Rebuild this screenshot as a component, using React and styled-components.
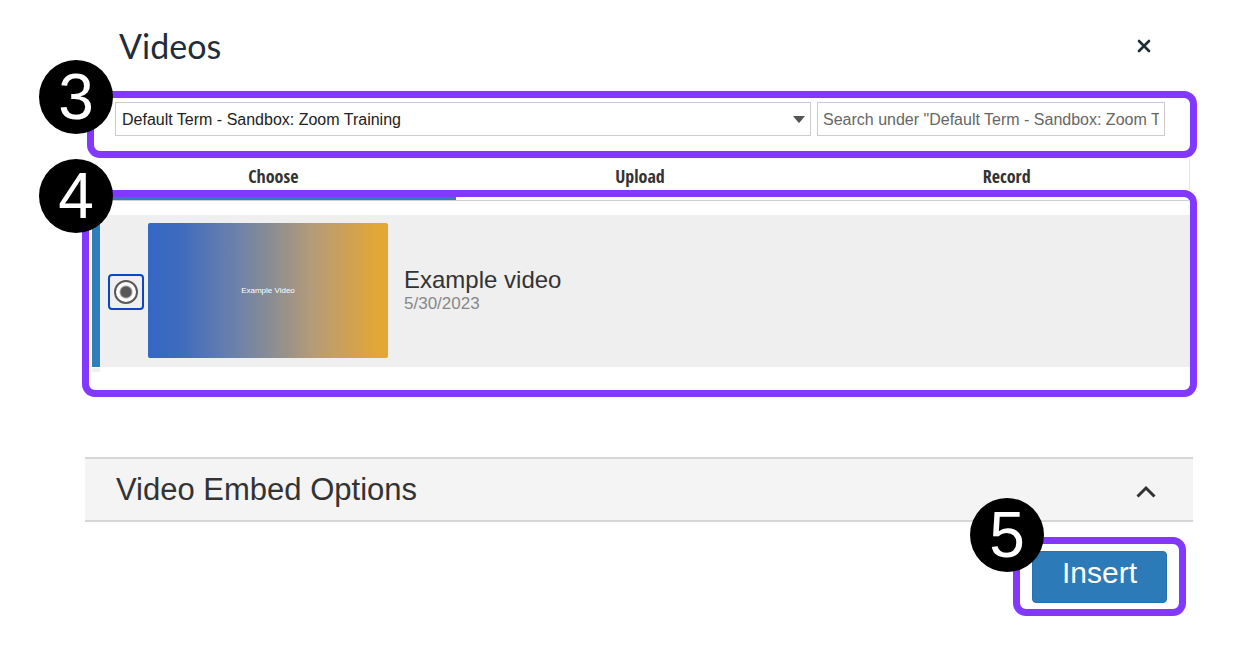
import React, { useState } from "react";
import styled, { createGlobalStyle } from "styled-components";

const GlobalStyle = createGlobalStyle`
  * {
    box-sizing: border-box;
  }

  body {
    margin: 0;
    background: #fff;
    color: #333;
    font-family: "Liberation Sans", Arial, sans-serif;
  }

  button, input, select {
    font-family: inherit;
  }
`;

const tabs = ["Choose", "Upload", "Record"];

const App = () => {
  const [activeTab, setActiveTab] = useState(0);
  const [query, setQuery] = useState("");
  const [open, setOpen] = useState(true);

  return (
    <Page>
      <GlobalStyle />
      <Header>
        <Title>Videos</Title>
        <CloseButton type="button" aria-label="Close">
          <svg width="14" height="14" viewBox="0 0 14 14" fill="none" stroke="currentColor" strokeWidth="2.6" strokeLinecap="round">
            <path d="M2 2 12 12M12 2 2 12" />
          </svg>
        </CloseButton>
      </Header>

      <FilterCallout>
        <Badge>3</Badge>
        <SelectBox>
          <Select aria-label="Folder">
            <option>Default Term - Sandbox: Zoom Training</option>
          </Select>
          <Caret width="12" height="7" viewBox="0 0 12 7" fill="#555">
            <path d="M0 0H12L6.6 6.4Q6 7 5.4 6.4Z" />
          </Caret>
        </SelectBox>
        <Search
          type="text"
          aria-label="Search videos"
          placeholder={'Search under "Default Term - Sandbox: Zoom Training"'}
          value={query}
          onChange={(e) => setQuery(e.target.value)}
        />
      </FilterCallout>

      <TabList role="tablist">
        {tabs.map((tab, i) => (
          <Tab key={tab} type="button" role="tab" aria-selected={i === activeTab} onClick={() => setActiveTab(i)}>
            {tab}
          </Tab>
        ))}
      </TabList>

      <ListCallout>
        <Badge>4</Badge>
        <TabLine>
          {tabs.map((tab, i) => (
            <TabMark key={tab} $active={i === activeTab} />
          ))}
        </TabLine>
        <VideoRow>
          <RadioBox>
            <Radio type="radio" name="video" aria-label="Example video" defaultChecked />
          </RadioBox>
          <Thumbnail>Example Video</Thumbnail>
          <VideoInfo>
            <VideoName>Example video</VideoName>
            <VideoDate>5/30/2023</VideoDate>
          </VideoInfo>
        </VideoRow>
        <NextRow />
      </ListCallout>

      <OptionsToggle type="button" aria-expanded={open} onClick={() => setOpen(!open)}>
        Video Embed Options
        <svg width="20" height="13" viewBox="0 0 20 13" fill="none" stroke="currentColor" strokeWidth="3">
          <path d="M1.5 11.5 10 3 18.5 11.5" />
        </svg>
      </OptionsToggle>

      <Footer>
        <InsertCallout>
          <Badge>5</Badge>
          <InsertButton type="button">Insert</InsertButton>
        </InsertCallout>
      </Footer>
    </Page>
  );
};

const Page = styled.main`
  padding: 0 42px 35px 82px;
`;

const Header = styled.header`
  display: flex;
  align-items: center;
  justify-content: space-between;
  height: 91px;
  padding: 0 39px 0 37px;
`;

const Title = styled.h1`
  margin: 0;
  color: #1f2d38;
  font-family: Lato, sans-serif;
  font-size: 34px;
  font-weight: 400;
  line-height: 40px;
`;

const CloseButton = styled.button`
  display: flex;
  align-items: center;
  justify-content: center;
  width: 28px;
  height: 28px;
  padding: 0;
  border: 0;
  background: none;
  color: #1f2d38;
  cursor: pointer;
`;

const Callout = styled.section`
  position: relative;
  border: 7px solid #8338ff;
  border-radius: 13px;
`;

const Badge = styled.span`
  position: absolute;
  display: flex;
  align-items: center;
  justify-content: center;
  width: 74px;
  height: 74px;
  border-radius: 50%;
  background: #000;
  color: #fff;
  font-size: 64px;
  line-height: 74px;
`;

const FilterCallout = styled(Callout)`
  display: grid;
  grid-template-columns: 2fr 1fr;
  gap: 6px;
  margin-left: 5px;
  padding: 4px 25px 15px 21px;

  ${Badge} {
    top: -38px;
    left: -55px;
  }
`;

const SelectBox = styled.div`
  position: relative;
  min-width: 0;
`;

const Select = styled.select`
  appearance: none;
  width: 100%;
  height: 34px;
  padding: 0 28px 0 6px;
  border: 1px solid #ccc;
  border-radius: 0;
  background: #fff;
  color: #222;
  font-size: 16px;
`;

const Caret = styled.svg`
  position: absolute;
  top: 14px;
  right: 6px;
  pointer-events: none;
`;

const Search = styled.input`
  min-width: 0;
  height: 34px;
  padding: 1px 5px 0;
  border: 1px solid #ccc;
  border-radius: 0;
  background: #fff;
  color: #222;
  font-size: 16px;

  &::placeholder {
    color: #666;
  }
`;

const TabList = styled.div`
  display: grid;
  grid-template-columns: repeat(3, 1fr);
  height: 32px;
  margin: 0 7px;
  border-right: 1px solid #e4e4e4;
`;

const Tab = styled.button`
  padding: 4px 0 0 2px;
  border: 0;
  background: none;
  color: #333;
  font-family: Haettenschweiler, "Noto Sans ExtraCondensed", "Open Sans Condensed", "Roboto Condensed", "Liberation Sans", sans-serif;
  font-size: 18px;
  font-weight: 700;
  cursor: pointer;
`;

const ListCallout = styled(Callout)`
  padding-bottom: 18px;

  ${Badge} {
    top: -38px;
    left: -50px;
  }
`;

const TabLine = styled.div`
  display: grid;
  grid-template-columns: repeat(3, 1fr);
  height: 4px;
  border-bottom: 1px solid #d0d0d0;
`;

const TabMark = styled.span`
  height: 3px;
  background: ${(props) => (props.$active ? "#2d7ebb" : "transparent")};
`;

const VideoRow = styled.article`
  display: flex;
  align-items: center;
  margin: 14px 0 0 3px;
  padding: 8px 8px 9px;
  border-left: 8px solid #2d7ebb;
  background: #efefef;
`;

const NextRow = styled.div`
  width: 8px;
  height: 4px;
  margin: 1px 0 0 3px;
  background: #efefef;
`;

const RadioBox = styled.label`
  display: flex;
  align-items: center;
  justify-content: center;
  width: 36px;
  height: 36px;
  margin: 2px 4px 0 0;
  border: 2px solid #0b46c8;
  border-radius: 4px;
`;

const Radio = styled.input`
  appearance: none;
  width: 24px;
  height: 24px;
  margin: 0;
  border: 2px solid #585858;
  border-radius: 50%;

  &:checked {
    background: radial-gradient(circle, #585858 5px, #fff 7px);
  }
`;

const Thumbnail = styled.div`
  display: flex;
  align-items: center;
  justify-content: center;
  width: 240px;
  height: 135px;
  margin-right: 16px;
  border-radius: 2px;
  background: linear-gradient(90deg, #3568c3 0%, #3c6abe 12%, #6980ac 35%, #878c95 50%, #b89c76 70%, #e2a735 96%);
  color: #fff;
  font-size: 8px;
`;

const VideoInfo = styled.div`
  display: flex;
  flex-direction: column;
`;

const VideoName = styled.h2`
  margin: 0;
  font-size: 24px;
  font-weight: 400;
  line-height: 26px;
`;

const VideoDate = styled.time`
  color: #888;
  font-size: 17px;
  line-height: 22px;
`;

const OptionsToggle = styled.button`
  display: flex;
  align-items: center;
  justify-content: space-between;
  width: calc(100% - 7px);
  height: 65px;
  margin: 60px 4px 0 3px;
  padding: 0 37px 0 31px;
  border: solid #d6d6d6;
  border-width: 2px 0;
  background: #f4f4f4;
  color: #333;
  font-size: 31px;
  cursor: pointer;

  svg {
    margin-top: 4px;
  }
`;

const Footer = styled.footer`
  display: flex;
  justify-content: flex-end;
  margin: 15px 11px 0 0;
`;

const InsertCallout = styled(Callout)`
  padding: 7px 12px 6px;

  ${Badge} {
    top: -46px;
    left: -50px;
  }
`;

const InsertButton = styled.button`
  display: block;
  width: 135px;
  height: 52px;
  padding: 0 0 8px;
  border: 1px solid #2273b2;
  border-radius: 4px;
  background: #2d7ab8;
  color: #fff;
  font-size: 30px;
  line-height: 34px;
  cursor: pointer;
`;

export default App;
